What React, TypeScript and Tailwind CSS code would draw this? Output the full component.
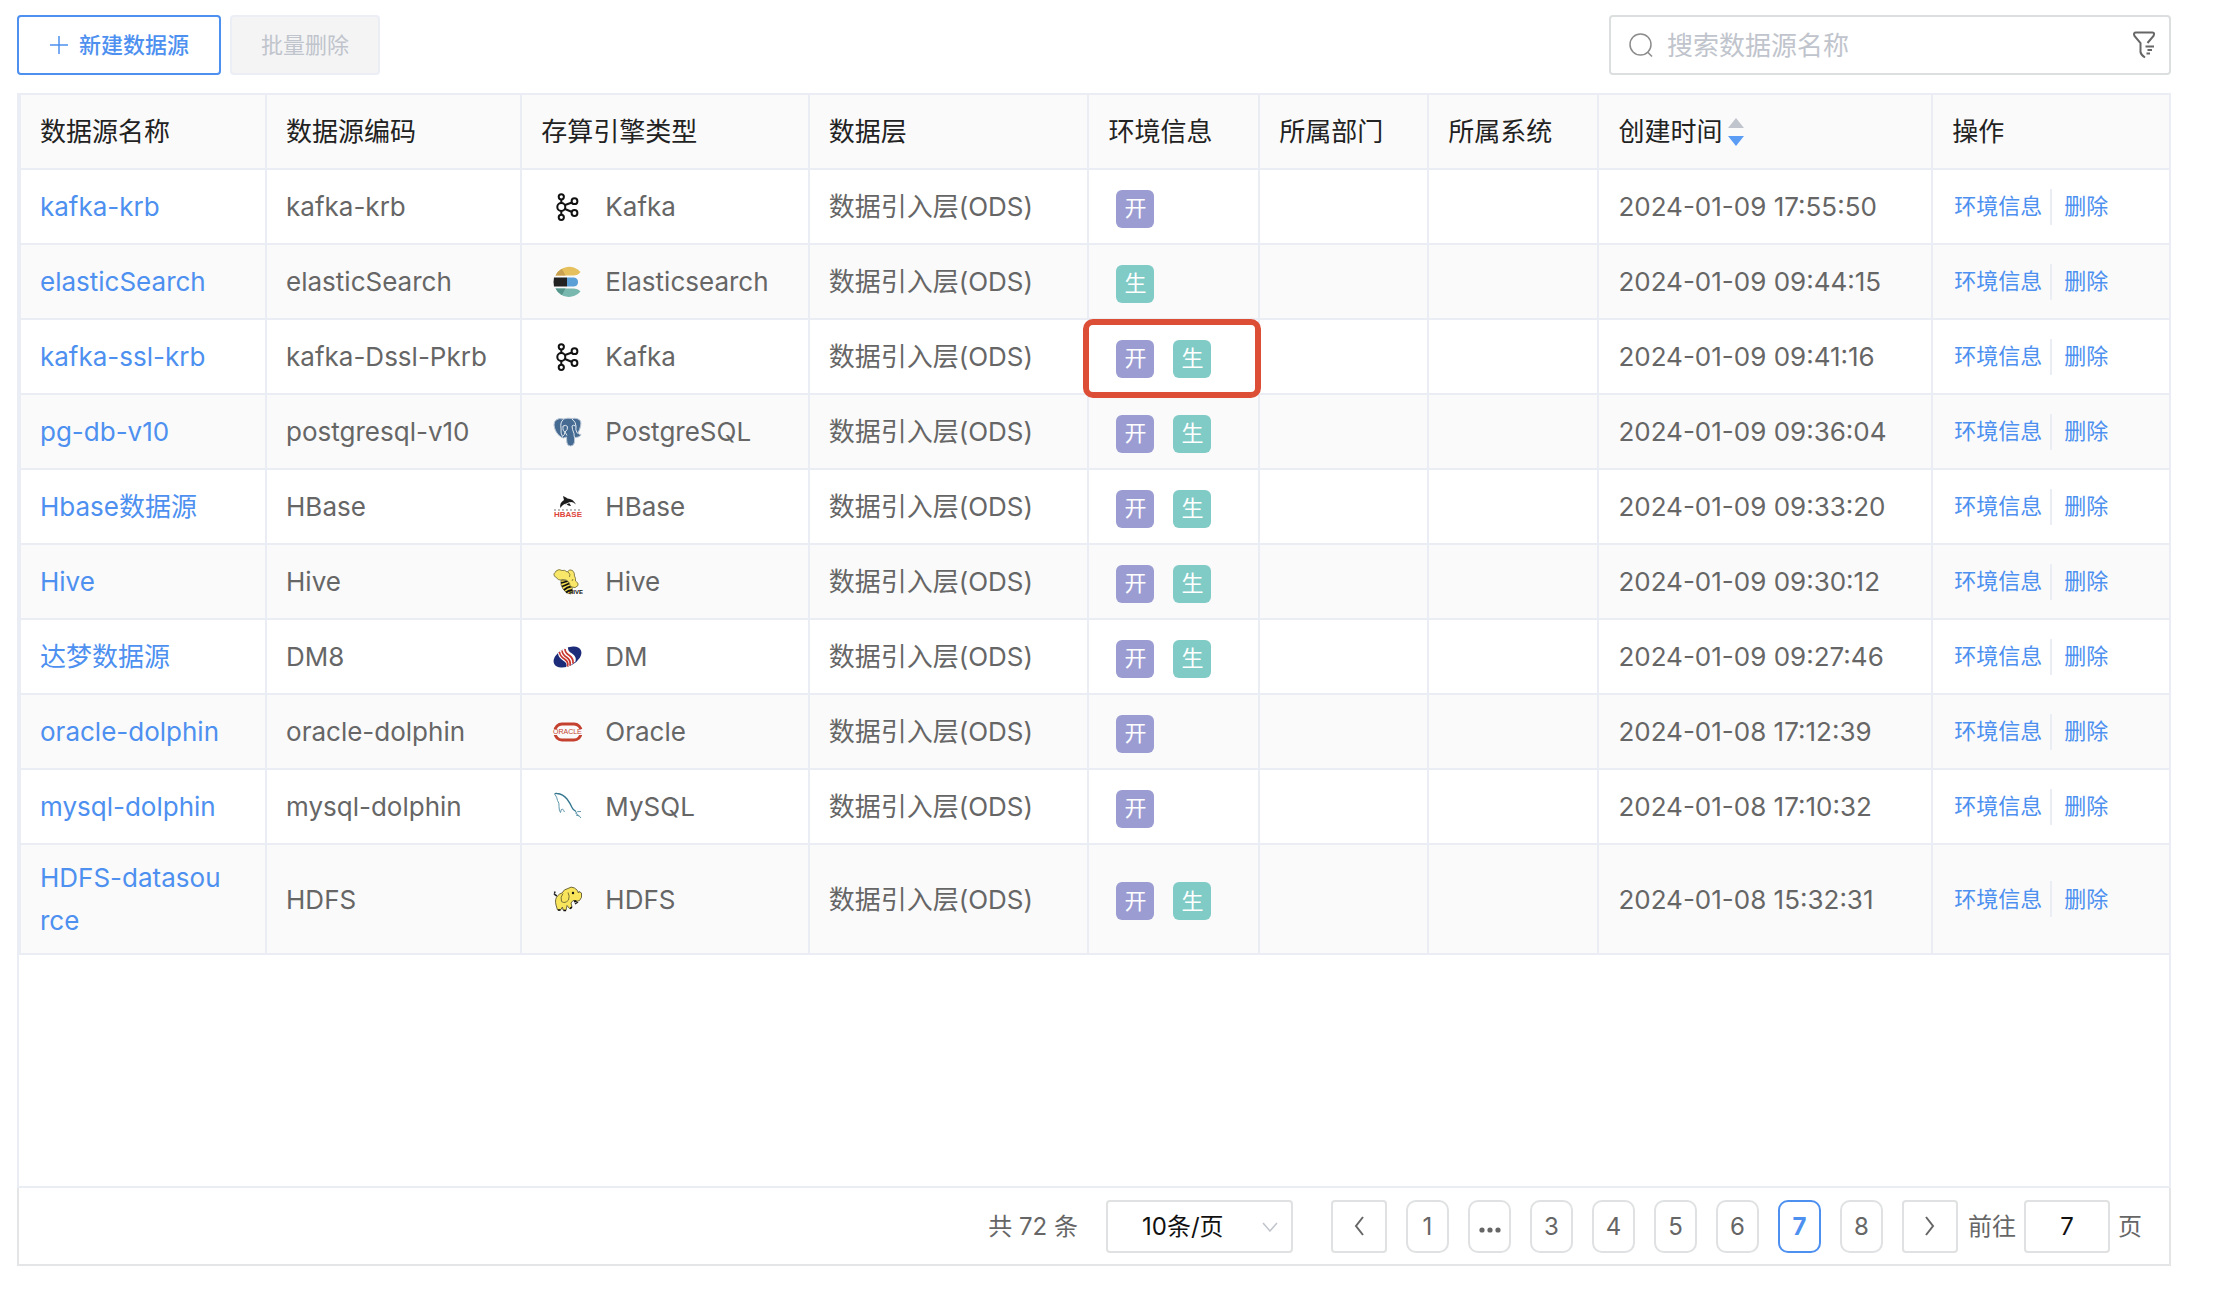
import type { ReactNode } from "react";

type Row = {
  name: string;
  code: string;
  engine: string;
  envs: ("dev" | "prod")[];
  time: string;
  marked?: boolean;
};

const rows: Row[] = [
  { name: "kafka-krb", code: "kafka-krb", engine: "Kafka", envs: ["dev"], time: "2024-01-09 17:55:50" },
  { name: "elasticSearch", code: "elasticSearch", engine: "Elasticsearch", envs: ["prod"], time: "2024-01-09 09:44:15" },
  { name: "kafka-ssl-krb", code: "kafka-Dssl-Pkrb", engine: "Kafka", envs: ["dev", "prod"], time: "2024-01-09 09:41:16", marked: true },
  { name: "pg-db-v10", code: "postgresql-v10", engine: "PostgreSQL", envs: ["dev", "prod"], time: "2024-01-09 09:36:04" },
  { name: "Hbase数据源", code: "HBase", engine: "HBase", envs: ["dev", "prod"], time: "2024-01-09 09:33:20" },
  { name: "Hive", code: "Hive", engine: "Hive", envs: ["dev", "prod"], time: "2024-01-09 09:30:12" },
  { name: "达梦数据源", code: "DM8", engine: "DM", envs: ["dev", "prod"], time: "2024-01-09 09:27:46" },
  { name: "oracle-dolphin", code: "oracle-dolphin", engine: "Oracle", envs: ["dev"], time: "2024-01-08 17:12:39" },
  { name: "mysql-dolphin", code: "mysql-dolphin", engine: "MySQL", envs: ["dev"], time: "2024-01-08 17:10:32" },
  { name: "HDFS-datasource", code: "HDFS", engine: "HDFS", envs: ["dev", "prod"], time: "2024-01-08 15:32:31" },
];

function Logo({ children }: { children: ReactNode }) {
  return (
    <svg viewBox="0 0 30 30" className="size-[30px] shrink-0 overflow-visible" fill="none" aria-hidden="true">
      {children}
    </svg>
  );
}

const engineLogos: Record<string, ReactNode> = {
  Kafka: (
    <Logo>
      <g stroke="#111" strokeWidth="2">
        <path d="M8.3 7.500V11M8.300 19V23M12 13L19 10.500M12 17L19 20" />
        <circle cx="8.300" cy="4.800" r="2.600" />
        <circle cx="8.300" cy="15" r="4" />
        <circle cx="8.300" cy="25.300" r="2.600" />
        <circle cx="21.500" cy="9.200" r="2.900" />
        <circle cx="21.500" cy="21" r="2.900" />
      </g>
    </Logo>
  ),
  Elasticsearch: (
    <Logo>
      <path d="M2.500 8.500A15 15 0 0 1 27.500 5Q25 8.500 20 8.500Z" fill="#e5c05c" />
      <path d="M2.500 8.500A15 15 0 0 1 9 1.800L12.500 8.500Z" fill="#c9a050" />
      <path d="M1 10.500H14V19.500H1Q0 15 1 10.500Z" fill="#222" />
      <path d="M14 10.500H21Q25 11 25 15T21 19.500H14Z" fill="#5a9fd6" />
      <path d="M2.500 21.500H20Q25 21.500 27.500 24.500A15 15 0 0 1 2.500 21.500Z" fill="#78b8ae" />
      <path d="M2.500 21.500H12.500L9 28A15 15 0 0 1 2.500 21.500Z" fill="#55958c" />
    </Logo>
  ),
  PostgreSQL: (
    <Logo>
      <path
        d="M3 3Q6 .8 10.500 2Q15 .6 19 1.500Q25 .5 27.500 4Q29 8 25 16Q25.500 17.500 28 17.500Q27 20.500 21.500 20.500V25Q21 29 17.500 29Q14 29 13.800 25L13.500 20Q10 22 8 20Q2 16 1 8Q1 4.500 3 3Z"
        fill="#466b92"
        stroke="#b9c6d4"
        strokeWidth="1"
      />
      <path
        d="M10.500 2.500Q7 5 8 11Q7.500 17 9.500 19.500Q12 17.500 12 15M12 15Q9.500 14.500 10 9Q13 7.500 14.500 9.500Q15 13 12 15L14 18.500M19 2Q23 5 23 9Q22 13 24.500 16.500M22.500 9Q20 7.500 19 9Q19 12 21 16.500Q21 19 21.500 20.500"
        stroke="#e3eaf1"
        strokeWidth="1"
      />
    </Logo>
  ),
  HBase: (
    <Logo>
      <path d="M7.500 16Q6 11 11 8L10 4Q13 5 14.500 6.500Q20 6.500 23 12.500Q19 9 16 10.500L18 14Q14 13.500 13.500 11.500Q9.500 12 7.500 16Z" fill="#1d1d1d" />
      <path d="M12 13Q15 10.500 18 10.500" stroke="#ddd" />
      <path d="M1 18H29" stroke="#a5a5a5" strokeWidth="1.500" strokeDasharray="2 2" />
      <text x="1" y="25" fontSize="8" fontWeight="700" fontFamily="Liberation Sans, sans-serif" fill="#dd4439">
        HBASE
      </text>
    </Logo>
  ),
  Hive: (
    <Logo>
      <path d="M8 13Q13 12 18 17Q21 23 18 27Q13 27 10 22Q7 18 8 13Z" fill="#f3de50" stroke="#333" strokeWidth=".6" />
      <path d="M8 16Q12 15 15 14M9 19.500Q13 18 16 16.500M11 23Q14 20 18 19.500M13 25.500Q15 23.500 19 23" stroke="#111" strokeWidth="1.800" />
      <path
        d="M.8 7Q2 6 3 4Q6 1.500 9 3.500Q12 2.500 14 5Q17 1.500 19.500 3.500Q22 6 21.500 9Q23 11 22.500 14Q26 16 25 18.500Q22 22 19 20Q16 19 16.500 16Q14 12 10 12.500Q5 14 3.500 10.500Q1 10 .8 7Z"
        fill="#f8e769"
        stroke="#6d6733"
        strokeWidth=".8"
      />
      <path d="M15 5Q18 7 16.500 10M20 12L19 14" stroke="#6d6733" strokeWidth=".8" />
      <text x="16" y="27" fontSize="6" fontWeight="700" fontFamily="Liberation Sans, sans-serif" fill="#111">
        HIVE
      </text>
    </Logo>
  ),
  DM: (
    <Logo>
      <ellipse cx="14.500" cy="15" rx="15" ry="9" transform="rotate(-28 14.500 15)" fill="#1d2c78" />
      <path d="M5 11Q10 6 15 5Q14.500 9 19 11.500Q24 15 22.500 19.500Q18 23.500 13 25.500Q15 21 10 18.500Q5 15 5 11Z" fill="#fff" />
      <path d="M6.500 10Q7 14.500 11.500 17Q16 20 14.500 24.500M9 8.500Q9.500 13 14 15.500Q18 18.500 17 23.500M12 7Q12 11 16.500 13.500Q20.500 16.500 20 21.500" stroke="#c8352e" strokeWidth="1.700" />
    </Logo>
  ),
  Oracle: (
    <Logo>
      <rect x="2" y="7" width="26" height="16" rx="7" stroke="#c5412f" strokeWidth="3" />
      <path d="M0 12H30V18H0Z" fill="#fafafa" />
      <text x="0" y="17" fontSize="7" fontFamily="Liberation Sans, sans-serif" fill="#c5412f">
        ORACLE
      </text>
    </Logo>
  ),
  MySQL: (
    <Logo>
      <path d="M2 2.500Q1.500 1.200 4 1.500Q10 2 14 7Q17 11 19 15.500Q20 18 23 19.500" stroke="#33758f" strokeWidth="1.300" />
      <path d="M2 2.500Q4 5 4.500 8.500Q6.500 11 6 14.500Q6 19 7.500 20.500Q8 16.500 9.500 17Q10.500 18 11.500 20M28 19.500Q24 19 22.500 21Q25 22 28 26M23 23L26 24" stroke="#5f97ab" strokeWidth="1" />
    </Logo>
  ),
  HDFS: (
    <Logo>
      <path d="M4 12Q2 11 1 9.500M1 8.500L2.500 8M15 18L18 25M25 18L22 20" stroke="#222" strokeWidth="1.500" />
      <path
        d="M9 9Q11 5 15 4.500Q18 2 21.500 4Q25 6 25.500 9L26 7.500L28.500 9Q29.500 14 26.500 16.500Q23 18.500 20 16.500L18 19L19 23L16.500 24.500L14 21.500L13 26.500L10 26L9.500 23L7.500 26H4.500L3 21Q1.500 15 4.500 12Q6.500 9.500 9 9Z"
        fill="#f8e55c"
        stroke="#5d5832"
        strokeWidth=".9"
      />
      <path d="M10 9.500Q7 13 8.500 17.500Q12 20 15.500 16Q17 12 15 8.500" stroke="#6d6733" strokeWidth=".9" />
      <path d="M5 26H7.500M10.500 26.500H13M17 24.500L19 23" stroke="#111" strokeWidth="1.500" />
      <circle cx="20" cy="9" r="1.200" fill="#111" />
      <path d="M21 17.500L23.500 17" stroke="#111" strokeWidth="2" />
    </Logo>
  ),
};

const columns = [
  { label: "数据源名称", width: "w-[11.45%]" },
  { label: "数据源编码", width: "w-[11.88%]" },
  { label: "存算引擎类型", width: "w-[13.37%]" },
  { label: "数据层", width: "w-[13.02%]" },
  { label: "环境信息", width: "w-[7.95%]" },
  { label: "所属部门", width: "w-[7.86%]" },
  { label: "所属系统", width: "w-[7.92%]" },
  { label: "创建时间", width: "w-[15.53%]", sortable: true },
  { label: "操作", width: "" },
];

const cell = "border-2 border-[#ebedf5] px-[19px] last:border-r-0";
const link = "text-[#4d90f0]";

function SortArrows() {
  return (
    <button aria-label="按创建时间排序">
      <svg viewBox="0 0 16 28" className="h-7 w-4">
        <path d="M8 0L16 10H0Z" fill="#c0c4cc" />
        <path d="M8 28L16 18H0Z" fill="#5b9cf5" />
      </svg>
    </button>
  );
}

function EnvTag({ kind }: { kind: "dev" | "prod" }) {
  return kind === "dev" ? (
    <span className="flex size-[38px] items-center justify-center rounded-[6px] bg-[#9b9cd2] text-[22px] text-white">开</span>
  ) : (
    <span className="flex size-[38px] items-center justify-center rounded-[6px] bg-[#80cbc6] text-[22px] text-white">生</span>
  );
}

function Toolbar() {
  return (
    <div className="flex items-center gap-[9px]">
      <button className="flex h-[60px] items-center gap-[10px] rounded-[4px] border-2 border-[#4d90f0] px-[30px] text-[22px] font-medium text-[#4d90f0]">
        <svg viewBox="0 0 20 20" className="size-5" stroke="currentColor" strokeWidth="1.500">
          <path d="M10 1V19M1 10H19" />
        </svg>
        新建数据源
      </button>
      <button disabled className="h-[60px] rounded-[4px] border-2 border-[#ebeef5] bg-[#f4f4f5] px-[29px] text-[22px] text-[#c0c4cc]">
        批量删除
      </button>
      <div className="ml-auto flex h-[60px] w-[562px] items-center rounded-[4px] border-2 border-[#dcdfe0] pr-[13px] pl-[18px]">
        <svg viewBox="0 0 24 24" className="size-6 shrink-0" fill="none" stroke="#8c8c8c" strokeWidth="1.500">
          <circle cx="11.500" cy="11.500" r="10.500" />
          <path d="M18.500 19L23 23.500" />
        </svg>
        <input
          type="text"
          aria-label="搜索数据源名称"
          placeholder="搜索数据源名称"
          className="mx-[14px] min-w-0 flex-1 outline-none placeholder:text-[#c0c4cc]"
        />
        <button aria-label="筛选">
          <svg viewBox="0 0 24 28" className="h-7 w-6" fill="none" stroke="#666" strokeWidth="2">
            <path d="M15.500 12L21.500 5Q23 1.500 20.500 1.500H4Q1 1.500 2.500 5L8.500 12V21Q9 24 13 26.500M13.500 15.500H22M15.500 19H20M14.500 22.500H18" />
          </svg>
        </button>
      </div>
    </div>
  );
}

const boxButton = "flex h-[53px] w-14 items-center justify-center rounded-[4px] border-2 border-[#dfe1e2]";
const pageButton = "flex h-[53px] w-[43px] items-center justify-center rounded-[10px] border-2";

function Pagination() {
  return (
    <nav aria-label="分页" className="flex h-[78px] items-center justify-end border-2 border-t-0 border-[#e4e5e7] pr-[27px] text-[24px]">
      <span>共 72 条</span>
      <div className="relative ml-7">
        <select aria-label="每页条数" defaultValue="10" className="h-[53px] w-[187px] appearance-none rounded-[4px] border-2 border-[#dfe1e2] pl-[34px] text-[#111]">
          <option value="10">10条/页</option>
          <option value="20">20条/页</option>
        </select>
        <svg viewBox="0 0 16 10" className="pointer-events-none absolute top-[22px] right-[15px] h-[10px] w-4" fill="none" stroke="#c0c4cc" strokeWidth="1.500">
          <path d="M1 1L8 9L15 1" />
        </svg>
      </div>
      <div className="ml-[38px] flex gap-[19px]">
        <button aria-label="上一页" className={boxButton}>
          <svg viewBox="0 0 10 20" className="h-5 w-[10px]" fill="none" stroke="#666" strokeWidth="2">
            <path d="M9 1L2 10L9 19" />
          </svg>
        </button>
        {["1", "…", "3", "4", "5", "6", "7", "8"].map((p) => (
          <button
            key={p}
            aria-label={p === "…" ? "更多页" : undefined}
            aria-current={p === "7" ? "page" : undefined}
            className={`${pageButton} ${p === "7" ? "border-[#4d90f0] font-bold text-[#4d90f0]" : "border-[#dfe1e2]"}`}
          >
            {p === "…" ? (
              <svg viewBox="0 0 22 6" className="mt-2 h-[6px] w-[22px] shrink-0" fill="#666">
                <circle cx="3" cy="3" r="2.600" />
                <circle cx="11" cy="3" r="2.600" />
                <circle cx="19" cy="3" r="2.600" />
              </svg>
            ) : (
              p
            )}
          </button>
        ))}
        <button aria-label="下一页" className={boxButton}>
          <svg viewBox="0 0 10 20" className="h-5 w-[10px]" fill="none" stroke="#666" strokeWidth="2">
            <path d="M1 1L8 10L1 19" />
          </svg>
        </button>
      </div>
      <label className="ml-[10px] flex items-center gap-2">
        前往
        <input type="text" defaultValue="7" className="h-[53px] w-[86px] rounded-[4px] border-2 border-[#dfe1e2] text-center text-[#111] outline-none" />
        页
      </label>
    </nav>
  );
}

export default function App() {
  return (
    <div className="flex min-h-screen flex-col bg-white pt-[15px] pr-[67px] pb-[46px] pl-[17px] font-[Inter,'Noto_Sans_CJK_SC',sans-serif] text-[26px] leading-[43px] text-[#666]">
      <Toolbar />
      <div className="mt-[18px] flex-1 border-2 border-t-0 border-[#ebedf5]">
        <table className="w-full table-fixed border-collapse">
          <thead>
            <tr className="h-[75px] bg-[#fafafa]">
              {columns.map((c) => (
                <th key={c.label} className={`${cell} ${c.width} text-left font-normal whitespace-nowrap text-[#222]`}>
                  {c.sortable ? (
                    <span className="flex items-center gap-[6px]">
                      {c.label}
                      <SortArrows />
                    </span>
                  ) : (
                    c.label
                  )}
                </th>
              ))}
            </tr>
          </thead>
          <tbody>
            {rows.map((r) => (
              <tr key={r.name} className="h-[75px] even:bg-[#fafafa]">
                <td className={`${cell} break-all`}>
                  <div className="py-[11px] pr-4">
                    <a href="#" className={link}>
                      {r.name}
                    </a>
                  </div>
                </td>
                <td className={cell}>{r.code}</td>
                <td className={cell}>
                  <span className="flex items-center gap-[22px] pl-3">
                    {engineLogos[r.engine]}
                    {r.engine}
                  </span>
                </td>
                <td className={cell}>数据引入层(ODS)</td>
                <td className={`${cell} relative`}>
                  <div className="flex gap-[19px] pt-1 pl-2">
                    {r.envs.map((e) => (
                      <EnvTag key={e} kind={e} />
                    ))}
                  </div>
                  {r.marked && <span className="pointer-events-none absolute -top-px -right-[3px] -bottom-[5px] -left-[6px] z-10 rounded-[10px] border-6 border-[#dc4e35]" />}
                </td>
                <td className={cell} />
                <td className={cell} />
                <td className={`${cell} whitespace-nowrap`}>{r.time}</td>
                <td className={cell}>
                  <div className="flex items-center pl-[2px] text-[22px] whitespace-nowrap">
                    <a href="#" className={link}>
                      环境信息
                    </a>
                    <span className="mr-3 ml-2 h-9 w-[2px] bg-[#ebedf5]" />
                    <a href="#" className={link}>
                      删除
                    </a>
                  </div>
                </td>
              </tr>
            ))}
          </tbody>
        </table>
      </div>
      <Pagination />
    </div>
  );
}
